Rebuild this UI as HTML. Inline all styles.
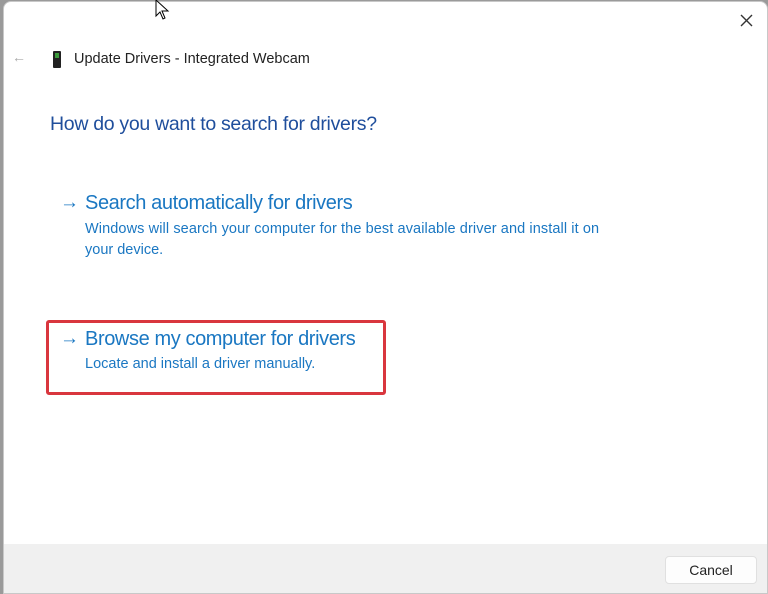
<!DOCTYPE html>
<html><head><meta charset="utf-8"><style>
body{margin:0;width:768px;height:594px;background:#9a9a9a;overflow:hidden;font-family:"Liberation Sans",sans-serif;position:relative}
.win{position:absolute;left:3px;top:1px;width:765px;height:593px;background:#fff;border-radius:8px 8px 0 0;overflow:hidden;border:1px solid #c8c8c8;box-sizing:border-box}
.t{position:absolute;white-space:nowrap}
.blue{color:#1a77c2}
.foot{position:absolute;left:0;top:542px;width:100%;height:60px;background:#f0f0f0}
.btn{position:absolute;left:661px;top:12px;width:92px;height:28px;background:#fdfdfd;border:1px solid #e0e0e0;border-radius:4px;box-sizing:border-box;font-size:14px;color:#222;text-align:center;line-height:26px}
.red{position:absolute;left:42px;top:318px;width:340px;height:75px;border:3px solid #d9363e;border-radius:3px;box-sizing:border-box}
</style></head><body>
<div class="win">
<svg style="position:absolute;left:736px;top:12px" width="13" height="13"><path d="M1 1L12 12M12 1L1 12" stroke="#333" stroke-width="1.4"/></svg>
<div class="t" style="left:8px;top:47px;font-size:14px;color:#aaa">←</div>
<div style="position:absolute;left:49px;top:49px;width:8px;height:17px;background:#222;border-radius:1px"><div style="position:absolute;left:2px;top:2px;width:4px;height:5px;background:#3c9a3c"></div></div>
<div class="t" style="left:70px;top:49px;font-size:14.5px;color:#222">Update Drivers - Integrated Webcam</div>
<div class="t" style="left:46px;top:111px;font-size:19.5px;color:#1f4e9c;letter-spacing:-0.3px">How do you want to search for drivers?</div>
<div class="t blue" style="left:56px;top:190px;font-size:19px">→</div>
<div class="t blue" style="left:81px;top:190px;font-size:20px;letter-spacing:-0.4px">Search automatically for drivers</div>
<div class="t blue" style="left:81px;top:219px;font-size:14.5px;letter-spacing:0.1px">Windows will search your computer for the best available driver and install it on</div>
<div class="t blue" style="left:81px;top:240px;font-size:14.5px">your device.</div>
<div class="red"></div>
<div class="t blue" style="left:56px;top:326px;font-size:19px">→</div>
<div class="t blue" style="left:81px;top:326px;font-size:20px;letter-spacing:-0.4px">Browse my computer for drivers</div>
<div class="t blue" style="left:81px;top:354px;font-size:14.5px">Locate and install a driver manually.</div>
<div class="foot"><div class="btn">Cancel</div></div>
</div>
<svg style="position:absolute;left:155px;top:0" width="16" height="22"><path d="M1 0 L1 16 L5 12 L8 19 L10 18 L7 11 L13 11 Z" fill="#fff" stroke="#000" stroke-width="1"/></svg>
</body></html>
